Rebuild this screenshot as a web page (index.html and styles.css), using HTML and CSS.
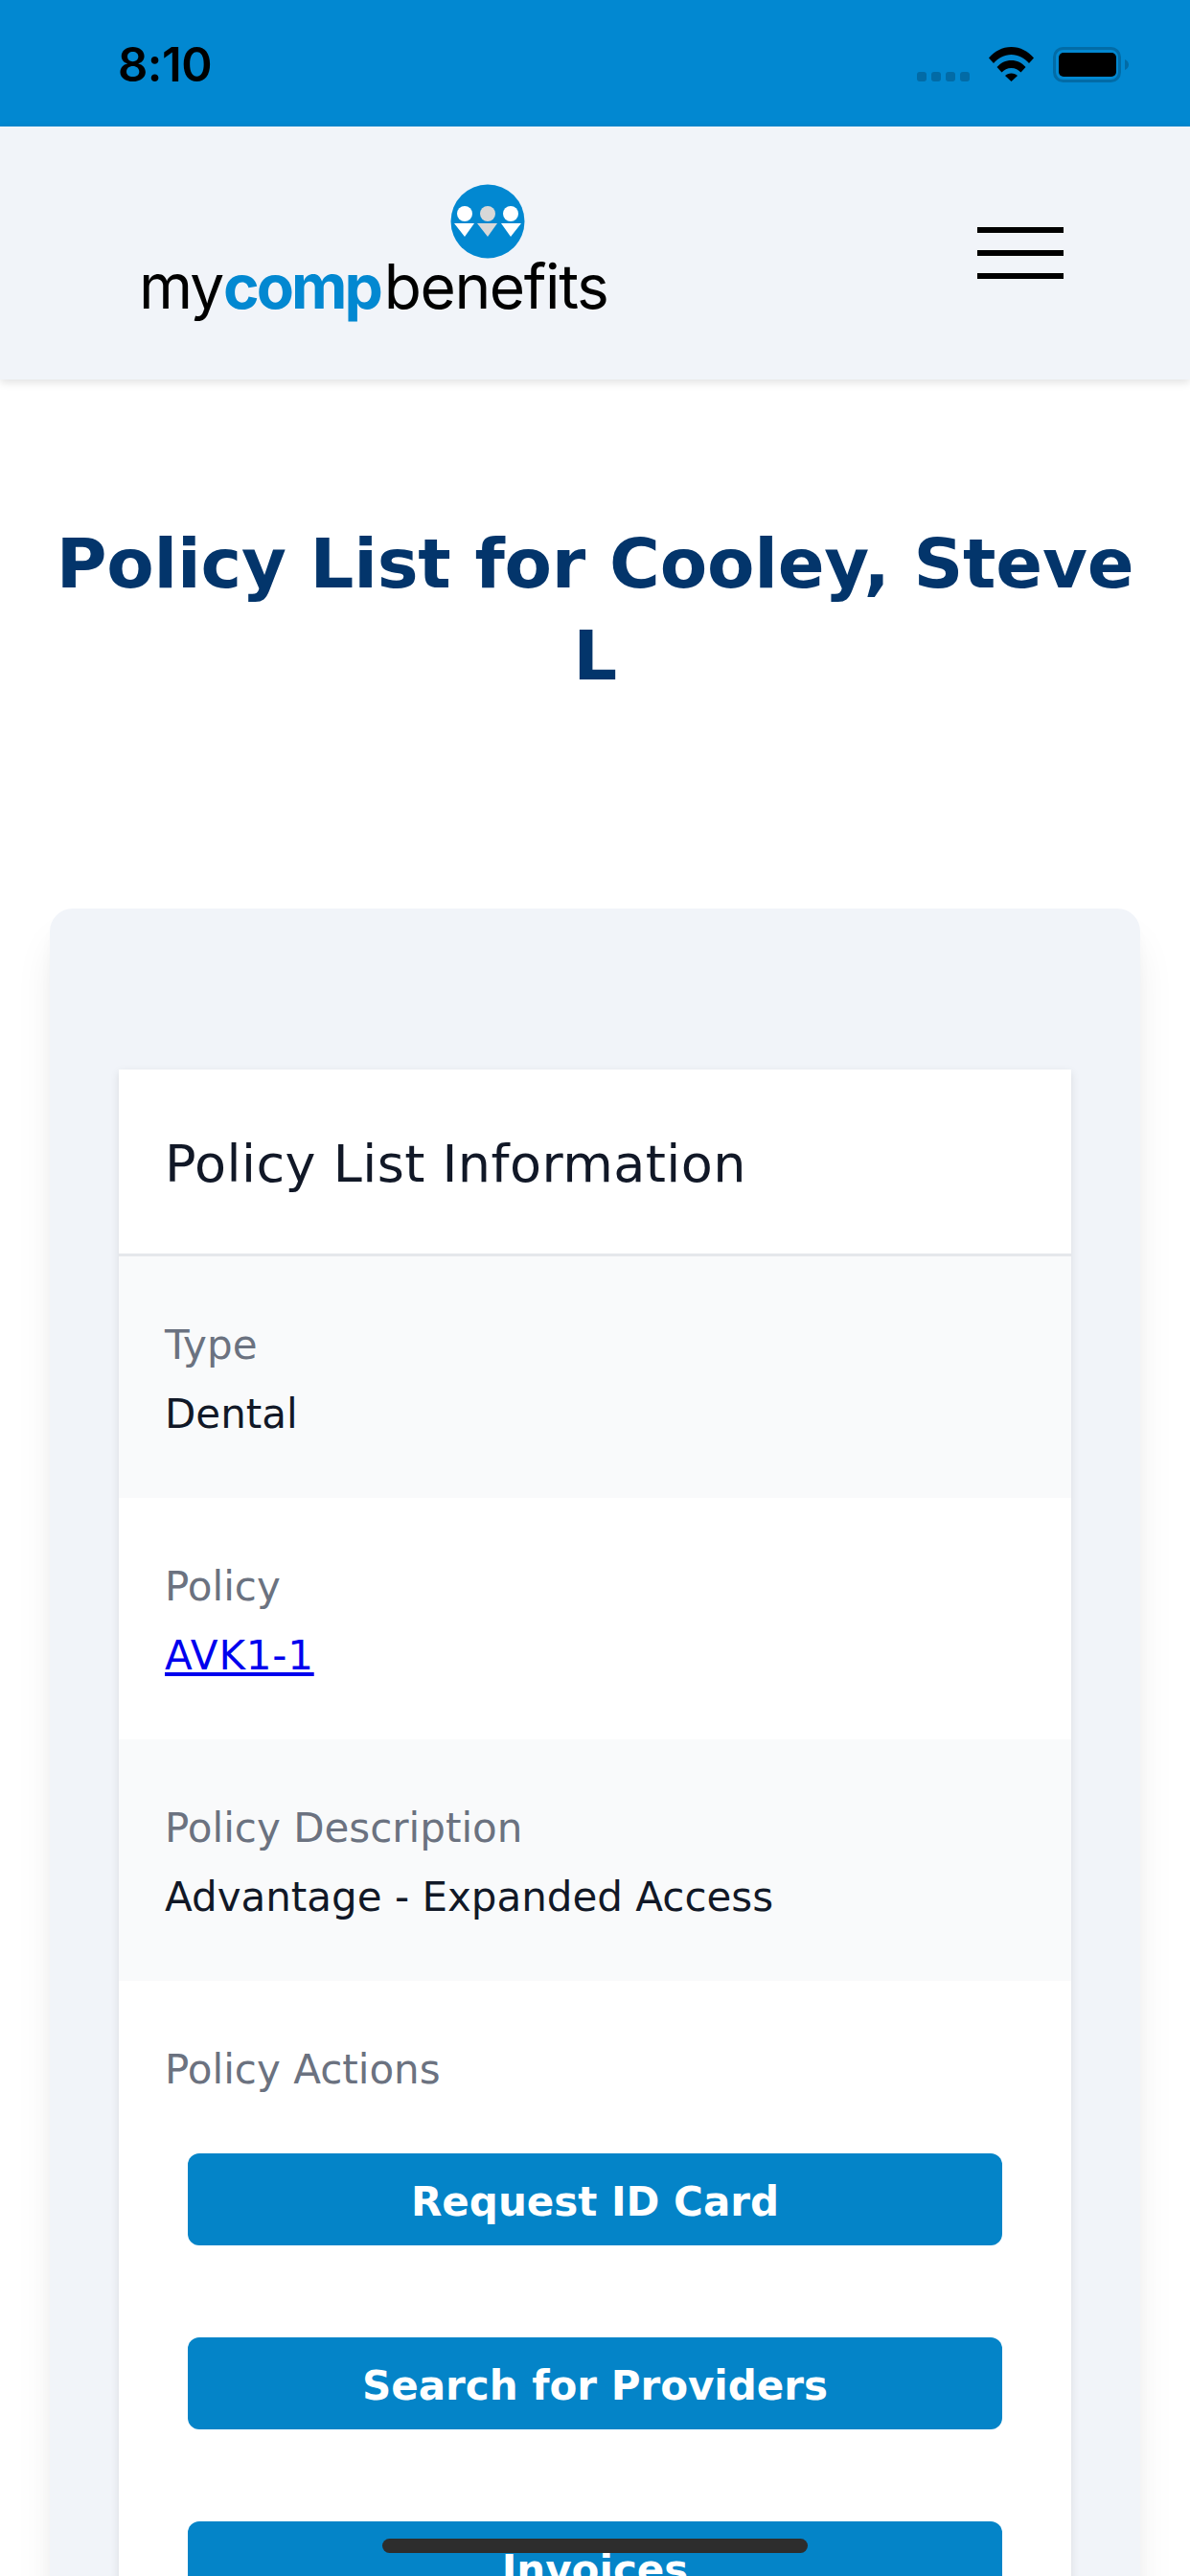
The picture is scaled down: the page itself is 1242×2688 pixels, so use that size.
FILE: index.html
```html
<!DOCTYPE html>
<html lang="en">
<head>
<meta charset="utf-8">
<title>Policy List</title>
<link rel="stylesheet" href="styles.css">
</head>
<body>
<div class="screen">
  <div class="status">
    <span class="time">8:10</span>
    <div class="status-icons">
      <div class="signal"><i></i><i></i><i></i><i></i></div>
      <svg class="wifi" viewBox="0 0 47 36" width="47" height="36"><path d="M0 11.5C6 4.5 14 0 23.5 0S41 4.500 47 11.500L42 17C37 11.500 31 8 23.500 8S10 11.500 5 17Z"/><path d="M8.500 21C12.500 16.500 17.500 14 23.500 14S34.500 16.500 38.500 21L33.500 26.500C31 23.800 27.500 22 23.500 22S16 23.800 13.500 26.500Z"/><path d="M17 30C18.500 28.500 20.800 27.500 23.500 27.500S28.500 28.500 30 30L23.500 36Z"/></svg>
      <svg class="battery" viewBox="0 0 79 37" width="79" height="37"><rect x="1.500" y="1.500" width="68" height="34" rx="9" fill="none" stroke="#026ba6" stroke-width="3"/><rect x="6" y="6" width="60" height="25" rx="5" fill="#000"/><path d="M75 13C77.500 14 79 16 79 18.500S77.500 23 75 24Z" fill="#026ba6"/></svg>
    </div>
  </div>
  <header class="topbar">
    <div class="logo">
      <svg class="logo-mark" viewBox="0 0 78 78" width="78" height="78">
        <circle cx="39" cy="39" r="38.500" fill="#0288d1"/>
        <circle cx="15" cy="31" r="8" fill="#fff"/>
        <circle cx="39" cy="31" r="8" fill="#d8d8d8"/>
        <circle cx="63" cy="31" r="8" fill="#fff"/>
        <polygon points="4,41 25,41 15,55" fill="#fff"/>
        <polygon points="28,41 49,41 39,55" fill="#d8d8d8"/>
        <polygon points="53,41 74,41 63,55" fill="#fff"/>
      </svg>
      <div class="logo-text"><span class="logo-my">my</span><b class="logo-comp">comp</b><span class="logo-benefits">benefits</span></div>
    </div>
    <button class="burger" aria-label="Menu"><i></i><i></i><i></i></button>
  </header>
  <main class="content">
    <h1 class="page-title">Policy List for Cooley, Steve L</h1>
    <section class="outer-card">
      <div class="inner-card">
        <h2 class="card-title">Policy List Information</h2>
        <div class="row shaded">
          <div class="label">Type</div>
          <div class="value">Dental</div>
        </div>
        <div class="row">
          <div class="label">Policy</div>
          <div class="value"><a class="link" href="#">AVK1-1</a></div>
        </div>
        <div class="row shaded">
          <div class="label">Policy Description</div>
          <div class="value">Advantage - Expanded Access</div>
        </div>
        <div class="row">
          <div class="label">Policy Actions</div>
          <div class="actions">
            <a class="btn" href="#">Request ID Card</a>
            <a class="btn" href="#">Search for Providers</a>
            <a class="btn" href="#">Invoices</a>
          </div>
        </div>
      </div>
    </section>
  </main>
  <div class="home-bar"></div>
</div>
</body>
</html>
```
FILE: styles.css
```css
* { box-sizing: border-box; }
html, body { margin: 0; padding: 0; background: #fff; }
.screen {
  position: relative;
  width: 1242px;
  height: 2688px;
  overflow: hidden;
  font-family: "DejaVu Sans", Verdana, sans-serif;
}
.status {
  height: 132px;
  background: #0288d1;
  display: flex;
  justify-content: space-between;
  padding: 49px 64px 0 123px;
}
.time {
  font-family: Inter, sans-serif;
  font-weight: 600;
  font-size: 49px;
  line-height: 38px;
  letter-spacing: -0.5px;
  color: #000;
}
.status-icons { display: flex; align-items: flex-start; }
.signal { display: flex; gap: 5px; margin-top: 26px; margin-right: 20px; }
.signal i { width: 10px; height: 10px; border-radius: 3px; background: #026ba6; }
.wifi { margin-right: 20px; }
.topbar {
  position: relative;
  height: 264px;
  background: #f1f4f9;
  box-shadow: 0 3px 9px rgba(0, 0, 0, 0.12);
  display: flex;
  justify-content: space-between;
  align-items: center;
  padding: 0 132px 0 145px;
}
.logo { align-self: flex-start; padding-top: 60px; width: 490px; }
.logo-mark { display: block; margin-left: 325px; }
.logo-text {
  font-family: Inter, sans-serif;
  font-size: 64px;
  line-height: 70px;
  margin-top: -6px;
  color: #000;
  white-space: nowrap;
}
.logo-my { letter-spacing: -2px; }
.logo-comp { color: #0288d1; font-weight: 700; letter-spacing: -3px; margin-left: 1px; }
.logo-benefits { letter-spacing: -1.4px; margin-left: 4px; }
.burger {
  width: 90px;
  padding: 0;
  border: 0;
  background: none;
  display: flex;
  flex-direction: column;
  gap: 18px;
}
.burger i { display: block; height: 6px; background: #000; }
.content { padding: 144px 48px 0; }
.page-title {
  margin: 0;
  text-align: center;
  font-size: 72px;
  line-height: 96px;
  font-weight: 700;
  letter-spacing: -0.2px;
  color: #03356b;
}
.outer-card {
  margin: 216px 4px 0;
  padding: 168px 72px 72px;
  background: #f1f4f9;
  border-radius: 24px;
  box-shadow: 0 30px 45px -9px rgba(0, 0, 0, 0.1), 0 12px 18px -6px rgba(0, 0, 0, 0.05);
}
.inner-card { background: #fff; box-shadow: 0 3px 9px rgba(0, 0, 0, 0.1); }
.card-title {
  margin: 0;
  padding: 57px 48px 51px;
  font-size: 54px;
  line-height: 84px;
  font-weight: 400;
  letter-spacing: 0.45px;
  color: #111827;
  border-bottom: 3px solid #e5e7eb;
}
.row { padding: 63px 48px 57px; }
.shaded { background: #f9fafb; }
.label { font-size: 42px; line-height: 60px; color: #6b7280; }
.value { margin-top: 12px; font-size: 42px; line-height: 60px; color: #111827; }
.link { color: #0000ee; text-decoration: underline; letter-spacing: 0.8px; }
.actions { display: flex; flex-direction: column; gap: 96px; padding: 0 24px; margin-top: 57px; }
.btn {
  display: block;
  height: 96px;
  border-radius: 12px;
  background: #0484c8;
  color: #fff;
  font-size: 42px;
  font-weight: 700;
  line-height: 102px;
  text-align: center;
  text-decoration: none;
}
.home-bar {
  position: absolute;
  left: 399px;
  top: 2649px;
  width: 444px;
  height: 15px;
  border-radius: 8px;
  background: #2d2d2d;
}
```
